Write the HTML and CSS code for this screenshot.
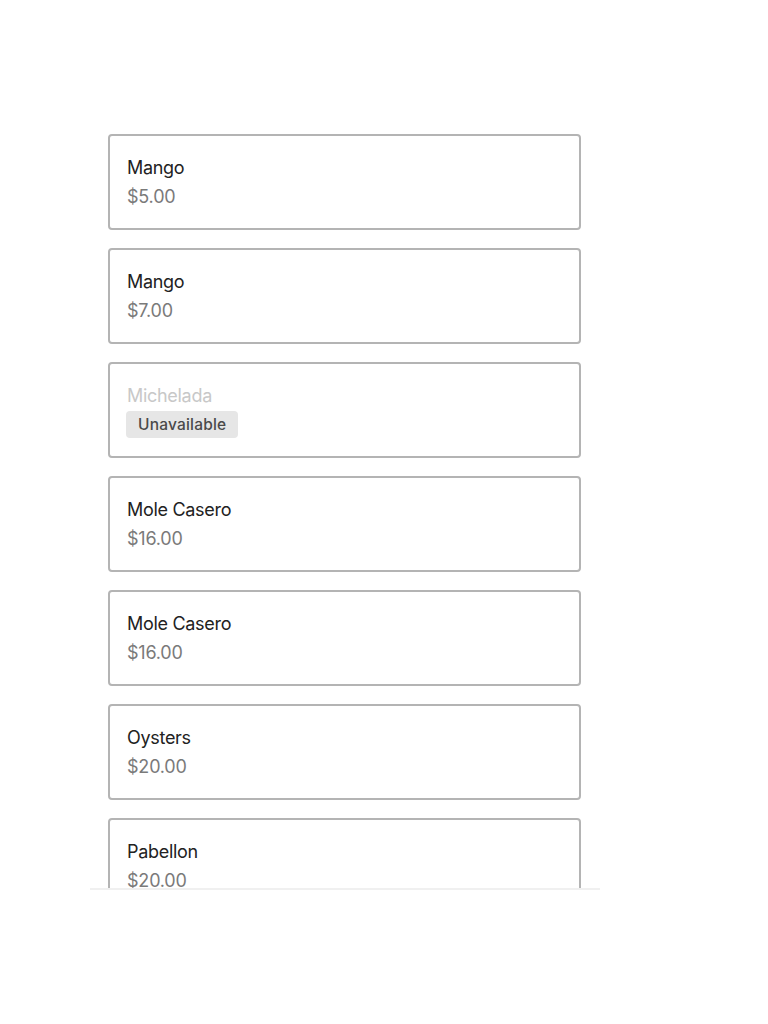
FILE: index.html
```html
<!DOCTYPE html>
<html>
<head>
<meta charset="utf-8">
<link rel="stylesheet" href="styles.css">
</head>
<body>
<div class="page">
  <div class="list">
    <div class="card"><div class="name">Mango</div><div class="price">$5.00</div></div>
    <div class="card"><div class="name">Mango</div><div class="price">$7.00</div></div>
    <div class="card disabled"><div class="name">Michelada</div><div class="badge">Unavailable</div></div>
    <div class="card"><div class="name">Mole Casero</div><div class="price">$16.00</div></div>
    <div class="card"><div class="name">Mole Casero</div><div class="price">$16.00</div></div>
    <div class="card"><div class="name">Oysters</div><div class="price">$20.00</div></div>
    <div class="card"><div class="name">Pabellon</div><div class="price">$20.00</div></div>
  </div>
</div>
</body>
</html>
```
FILE: styles.css
```css
html, body {
  margin: 0;
  padding: 0;
  background: #fff;
}
body {
  font-family: Inter, "Noto Sans", sans-serif;
  color: #1a1a1a;
}
.page {
  padding-top: 134px;
  padding-left: 90px;
}
.list {
  width: 510px;
  height: 756px;
  overflow: hidden;
  border-bottom: 2px solid #f0f0f0;
  box-sizing: border-box;
  padding: 0 19px 0 18px;
  display: flex;
  flex-direction: column;
  gap: 18px;
}
.card {
  flex: none;
  height: 96px;
  box-sizing: border-box;
  border: 2px solid #b4b4b4;
  border-radius: 4px;
  padding: 19px 17px 0;
}
.name {
  font-size: 18px;
  line-height: 26px;
  letter-spacing: -0.3px;
  color: #222;
}
.price {
  font-size: 18px;
  line-height: 32px;
  letter-spacing: -0.2px;
  color: #7a7a7a;
}
.disabled .name {
  color: #c8c8c8;
}
.badge {
  display: inline-block;
  margin-top: 2px;
  margin-left: -1px;
  background: #e6e6e6;
  color: #4a4a4a;
  font-size: 15.5px;
  font-weight: 500;
  letter-spacing: 0.2px;
  line-height: 27px;
  padding: 0 12px 0 12px;
  border-radius: 4px;
}
```
